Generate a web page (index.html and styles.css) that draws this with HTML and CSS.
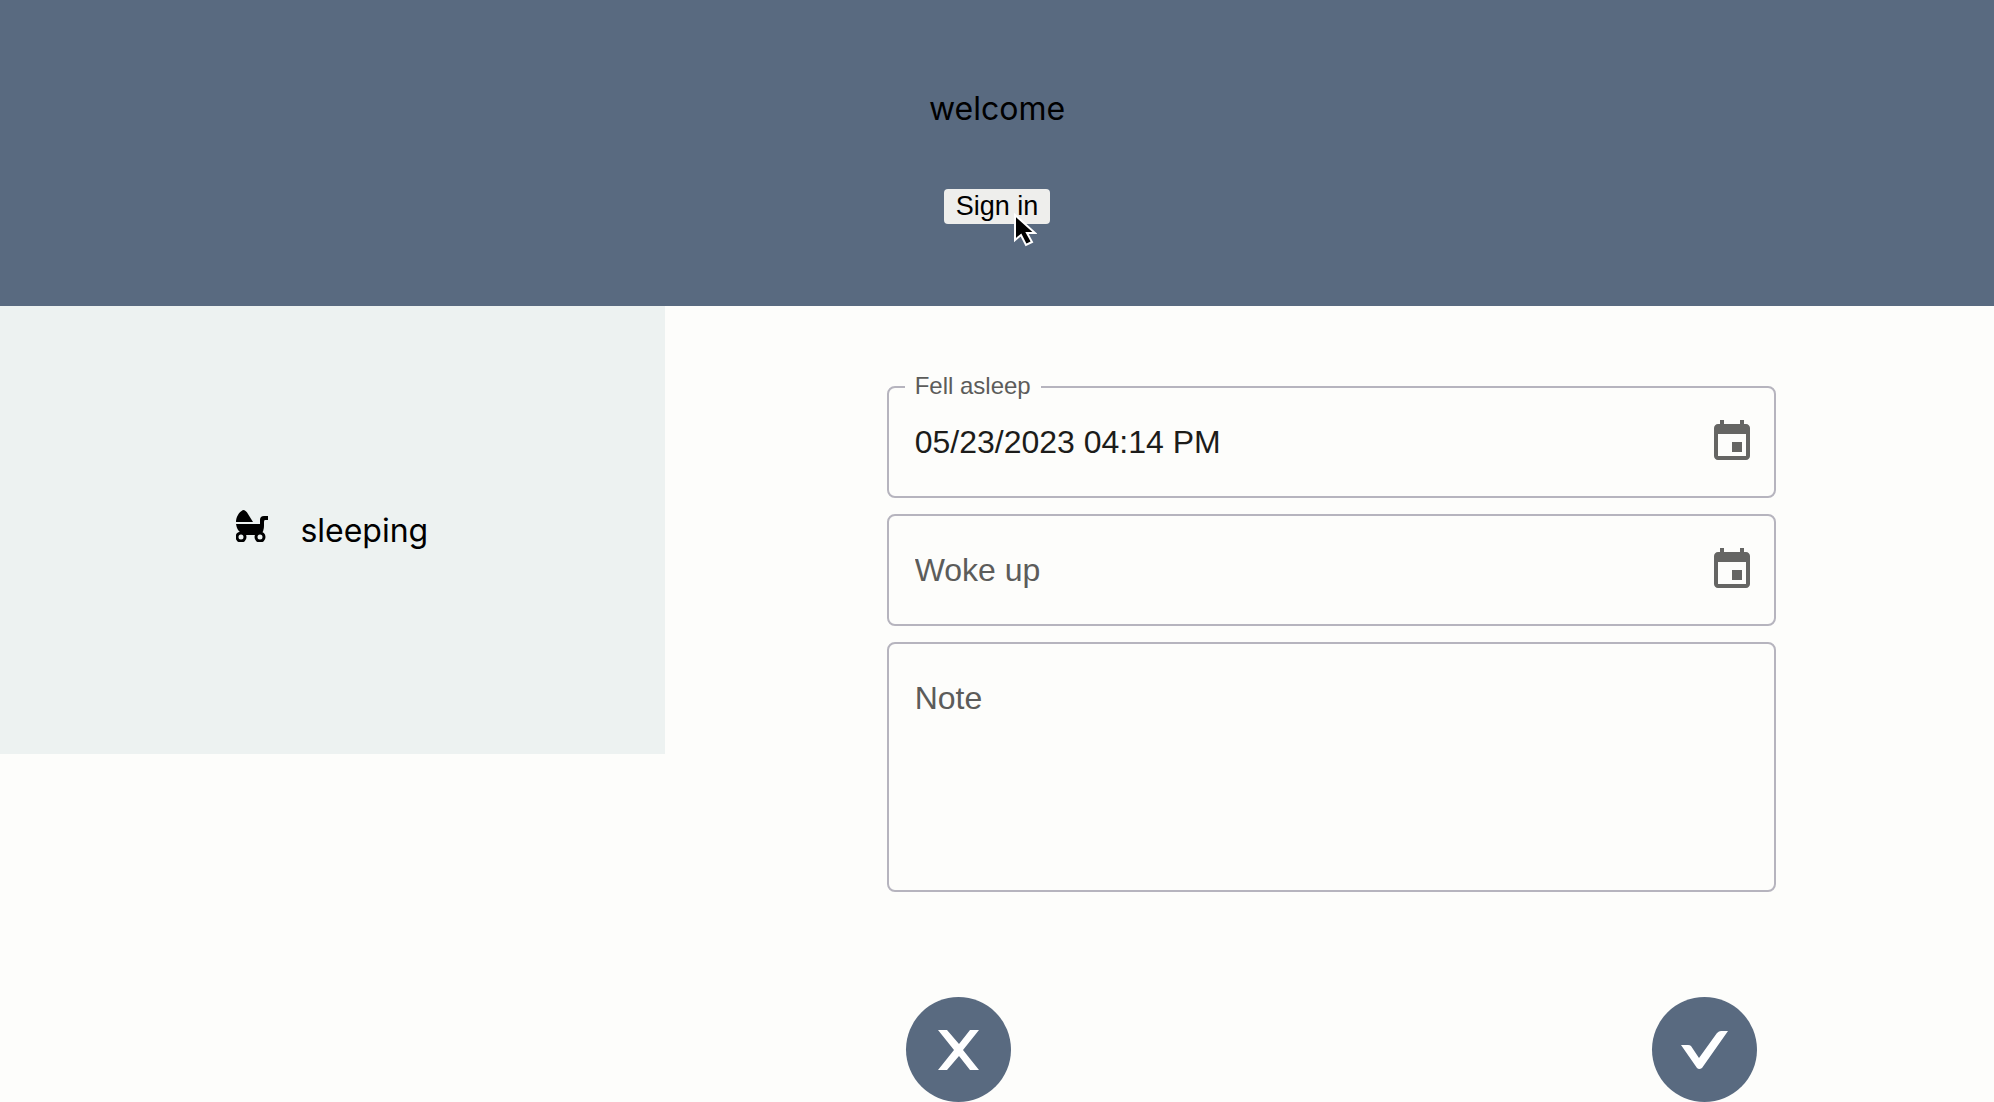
FILE: index.html
```html
<!DOCTYPE html>
<html lang="en">
<head>
<meta charset="utf-8">
<meta name="viewport" content="width=device-width, initial-scale=1">
<title>Sleep tracker</title>
<link rel="stylesheet" href="styles.css">
</head>
<body>
<header class="header">
  <p class="welcome">welcome</p>
  <div class="signin">
    <button class="signin-button" type="button">Sign in</button>
    <svg class="cursor" viewBox="0 0 24 34" aria-hidden="true"><path d="M2 2v25l6-5 5 10 6-3-5-9h8z" fill="#000" stroke="#fff" stroke-width="2"/></svg>
  </div>
</header>
<main class="main">
  <section class="activity">
    <svg class="pram" viewBox="0 0 32 32" aria-hidden="true">
      <path d="M0 12C0 7 3 2 7 0c2 0 4 2 5 4l5 8z"/>
      <path d="M0 14h24v-4q0-4 4-4h4v4h-3q-1 0-1 2v4q0 5-3 8v1H4v-3Q1 20 0 14z"/>
      <circle class="wheel" cx="5" cy="27" r="4"/><circle class="wheel" cx="24" cy="27" r="4"/>
    </svg>
    <span>sleeping</span>
  </section>
  <form class="form">
    <div class="field">
      <label class="label label-raised" for="asleep">Fell asleep</label>
      <input class="input" id="asleep" type="text" value="05/23/2023 04:14 PM">
      <button class="pick" type="button" aria-label="Choose date"><svg class="calendar" viewBox="0 0 24 24"><path d="M17 12h-5v5h5v-5zM16 1v2H8V1H6v2H5c-1.11 0-1.99.9-1.99 2L3 19c0 1.1.89 2 2 2h14c1.1 0 2-.9 2-2V5c0-1.1-.9-2-2-2h-1V1h-2zm3 18H5V8h14v11z"/></svg></button>
    </div>
    <div class="field">
      <input class="input" id="woke" type="text" placeholder="Woke up" aria-label="Woke up">
      <button class="pick" type="button" aria-label="Choose date"><svg class="calendar" viewBox="0 0 24 24"><path d="M17 12h-5v5h5v-5zM16 1v2H8V1H6v2H5c-1.11 0-1.99.9-1.99 2L3 19c0 1.1.89 2 2 2h14c1.1 0 2-.9 2-2V5c0-1.1-.9-2-2-2h-1V1h-2zm3 18H5V8h14v11z"/></svg></button>
    </div>
    <div class="field">
      <textarea class="input note" id="note" placeholder="Note" aria-label="Note"></textarea>
    </div>
    <div class="actions">
      <button class="round" type="button" aria-label="Cancel"><svg class="mark" viewBox="0 0 105 105"><path d="M32 33h9l12 14 11-14h9L57 53l16 20h-9L53 59 41 73h-9l16-20z"/></svg></button>
      <button class="round" type="submit" aria-label="Save"><svg class="mark" viewBox="0 0 105 105"><path d="M29 48h7q2 0 3 1l8 12 18-25q2-2 4-2h7L50 71q-3 2-5 0z"/></svg></button>
    </div>
  </form>
</main>
</body>
</html>
```
FILE: styles.css
```css
* { box-sizing: border-box; }
body {
  margin: 0;
  background: #fdfdfb;
  color: #000;
  font-family: Inter, "Liberation Sans", sans-serif;
  font-size: 32px;
  line-height: 40px;
}
button, input, textarea { font-family: "Liberation Sans", Arial, sans-serif; }
.header {
  display: flex;
  flex-direction: column;
  align-items: center;
  gap: 60px;
  padding: 89px 0 82px;
  background: #596a80;
}
.welcome { margin: 0; }
.signin { position: relative; display: flex; }
.signin-button {
  padding: 0 12px;
  border: 0;
  border-radius: 4px;
  background: #eeeeec;
  color: #000;
  font-size: 27px;
  line-height: 35px;
}
.cursor { position: absolute; left: 69px; top: 24px; width: 24px; height: 34px; }
.main { display: grid; grid-template-columns: 1fr 2fr; align-items: start; }
.activity {
  display: flex;
  align-items: center;
  justify-content: center;
  gap: 32px;
  height: 448px;
  padding-top: 2px;
  background: #edf2f1;
}
.pram { width: 32px; height: 32px; margin-bottom: 10px; }
.wheel { fill: #edf2f1; stroke: #000; stroke-width: 3px; }
.form {
  display: flex;
  flex-direction: column;
  gap: 16px;
  padding: 80px 16.4% 0 16.7%;
}
.field {
  position: relative;
  display: flex;
  align-items: center;
  border: 2px solid #b6b4be;
  border-radius: 8px;
}
.label { color: #5c5c5a; font-family: "Liberation Sans", Arial, sans-serif; }
.label-raised {
  position: absolute;
  left: 16px;
  top: -16px;
  padding: 0 10px;
  background: #fdfdfb;
  font-size: 24px;
  line-height: 28px;
}
.input {
  flex: 1;
  min-width: 0;
  height: 108px;
  padding: 0 26px;
  border: 0;
  outline: 0;
  background: transparent;
  color: #1c1c1a;
  font-size: 32px;
}
.input::placeholder { color: #5c5c5a; opacity: 1; }
.note { height: 246px; padding: 34px 26px; line-height: 40px; resize: none; }
.pick { display: flex; margin-right: 18px; padding: 0; border: 0; background: none; }
.calendar { width: 48px; height: 48px; fill: #656563; }
.actions { display: flex; justify-content: space-between; padding: 89px 19px 0; }
.round {
  display: flex;
  width: 105px;
  height: 105px;
  padding: 0;
  border: 0;
  border-radius: 50%;
  background: #596a80;
}
.mark { width: 105px; height: 105px; fill: #fff; }
```
